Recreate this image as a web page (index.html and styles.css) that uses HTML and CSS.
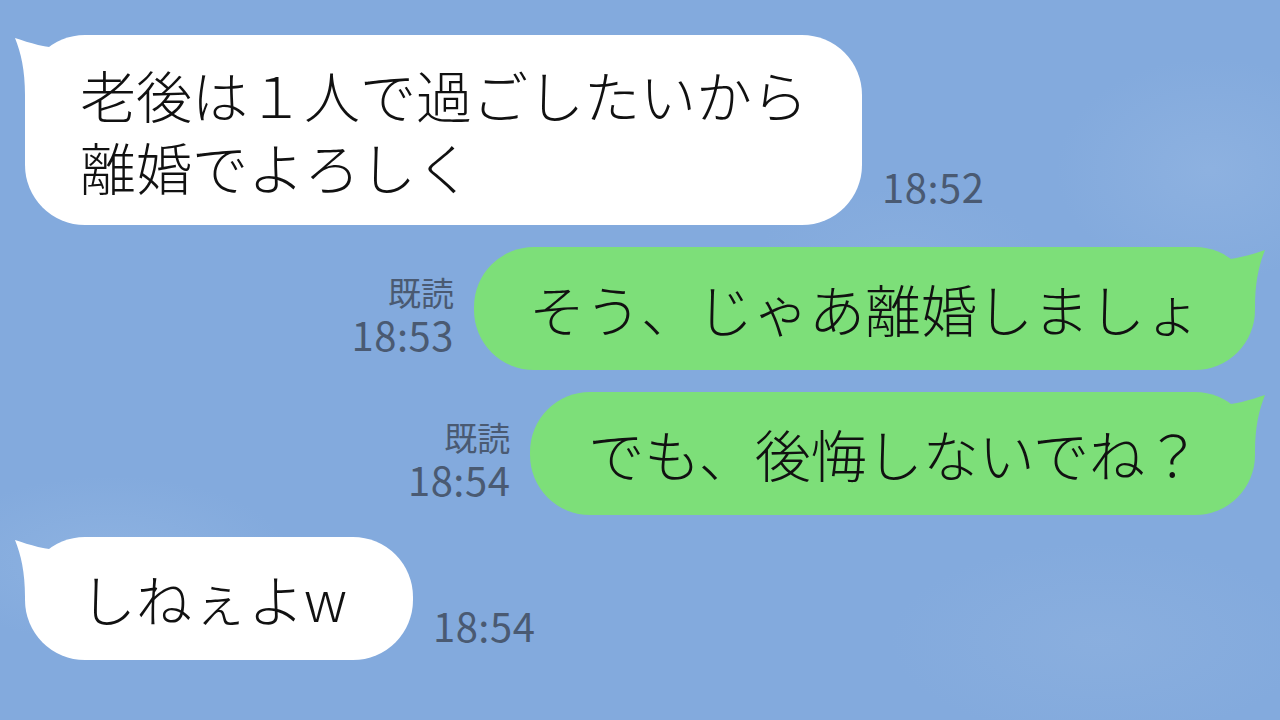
FILE: index.html
```html
<!DOCTYPE html>
<html lang="ja">
<head>
<meta charset="utf-8">
<title>トーク</title>
<link rel="stylesheet" href="styles.css">
</head>
<body>
<main class="chat">
  <div class="row row-in">
    <div class="bubble bubble-in bubble-multi">
      <svg class="tail tail-in" viewBox="0 0 60 60" aria-hidden="true"><path d="M2 3 C17 8 32 13 52 13 L52 60 L12 60 C12 35 8 18 2 3 Z"/></svg>
      <p class="text">老後は１人で過ごしたいから<br>離婚でよろしく</p>
    </div>
    <div class="meta meta-in"><span class="time">18:52</span></div>
  </div>

  <div class="row row-out">
    <div class="meta meta-out"><span class="read">既読</span><span class="time">18:53</span></div>
    <div class="bubble bubble-out">
      <svg class="tail tail-out" viewBox="0 0 60 60" aria-hidden="true"><path d="M2 3 C17 8 32 13 52 13 L52 60 L12 60 C12 35 8 18 2 3 Z"/></svg>
      <p class="text">そう、じゃあ離婚しましょ</p>
    </div>
  </div>

  <div class="row row-out">
    <div class="meta meta-out"><span class="read">既読</span><span class="time">18:54</span></div>
    <div class="bubble bubble-out bubble-wide">
      <svg class="tail tail-out" viewBox="0 0 60 60" aria-hidden="true"><path d="M2 3 C17 8 32 13 52 13 L52 60 L12 60 C12 35 8 18 2 3 Z"/></svg>
      <p class="text">でも、後悔しないでね？</p>
    </div>
  </div>

  <div class="row row-in">
    <div class="bubble bubble-in bubble-short">
      <svg class="tail tail-in" viewBox="0 0 60 60" aria-hidden="true"><path d="M2 3 C17 8 32 13 52 13 L52 60 L12 60 C12 35 8 18 2 3 Z"/></svg>
      <p class="text">しねぇよw</p>
    </div>
    <div class="meta meta-in meta-last"><span class="time">18:54</span></div>
  </div>
</main>
</body>
</html>
```

FILE: styles.css
```css
html, body {
  margin: 0;
  padding: 0;
  width: 1280px;
  height: 720px;
  overflow: hidden;
}

body {
  font-family: "Noto Sans CJK JP", "Noto Sans", sans-serif;
  background-color: #83aadd;
  background-image:
    radial-gradient(ellipse 260px 120px at 110px 560px, rgba(150, 185, 228, 0.55), rgba(150, 185, 228, 0) 70%),
    radial-gradient(ellipse 220px 160px at 1210px 170px, rgba(148, 182, 226, 0.6), rgba(148, 182, 226, 0) 70%),
    radial-gradient(ellipse 300px 140px at 1100px 640px, rgba(146, 180, 224, 0.45), rgba(146, 180, 224, 0) 70%),
    radial-gradient(ellipse 200px 90px at 900px 250px, rgba(145, 180, 224, 0.35), rgba(145, 180, 224, 0) 70%);
}

.chat {
  display: flex;
  flex-direction: column;
  gap: 22px;
  padding: 35px 25px 0 25px;
}

.row {
  display: flex;
  align-items: flex-end;
  gap: 20px;
}

.row-out {
  justify-content: flex-end;
}

.bubble {
  position: relative;
  border-radius: 60px;
  padding: 25px 54px 26px 55px;
}

.bubble-multi {
  padding-top: 23px;
  padding-bottom: 23px;
}

.bubble-wide {
  padding-left: 58px;
}

.bubble-short {
  padding-right: 66px;
}

.bubble-in {
  background: #ffffff;
}

.bubble-out {
  background: #7ddf79;
}

.text {
  position: relative;
  margin: 0;
  font-size: 56px;
  font-weight: 300;
  line-height: 72px;
  color: #111111;
  white-space: nowrap;
}

.tail {
  position: absolute;
  top: 0;
  width: 60px;
  height: 60px;
}

.tail-in {
  left: -12px;
  fill: #ffffff;
}

.tail-out {
  right: -12px;
  fill: #7ddf79;
  transform: scaleX(-1);
}

.meta {
  display: flex;
  flex-direction: column;
  color: #4a5a72;
  line-height: 42px;
}

.time {
  font-size: 40px;
  letter-spacing: 0.5px;
}

.read {
  font-size: 33px;
}

.meta-in {
  margin-bottom: 18px;
}

.meta-last {
  margin-bottom: 14px;
}

.meta-out {
  align-items: flex-end;
  margin-bottom: 15px;
}
```
